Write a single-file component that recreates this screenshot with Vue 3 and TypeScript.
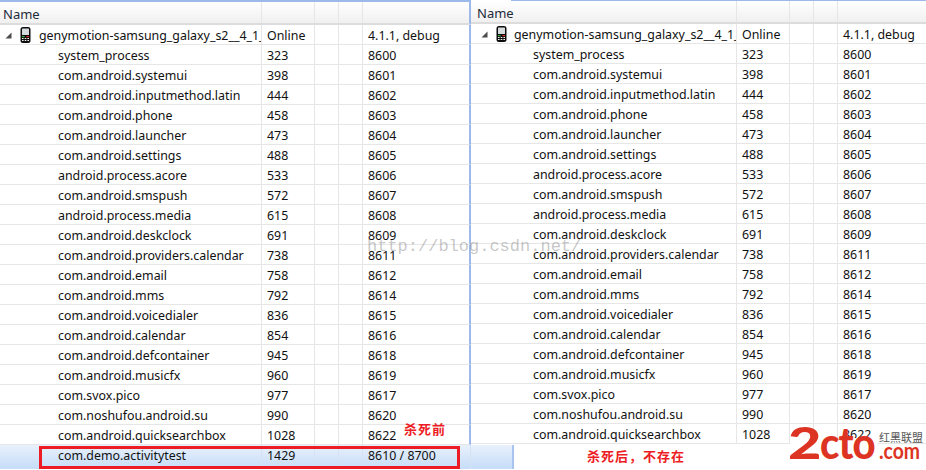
<script setup lang="ts">
interface Proc { name: string; pid: string; port: string }
const procs: Proc[] = [
  { name: 'system_process', pid: '323', port: '8600' },
  { name: 'com.android.systemui', pid: '398', port: '8601' },
  { name: 'com.android.inputmethod.latin', pid: '444', port: '8602' },
  { name: 'com.android.phone', pid: '458', port: '8603' },
  { name: 'com.android.launcher', pid: '473', port: '8604' },
  { name: 'com.android.settings', pid: '488', port: '8605' },
  { name: 'android.process.acore', pid: '533', port: '8606' },
  { name: 'com.android.smspush', pid: '572', port: '8607' },
  { name: 'android.process.media', pid: '615', port: '8608' },
  { name: 'com.android.deskclock', pid: '691', port: '8609' },
  { name: 'com.android.providers.calendar', pid: '738', port: '8611' },
  { name: 'com.android.email', pid: '758', port: '8612' },
  { name: 'com.android.mms', pid: '792', port: '8614' },
  { name: 'com.android.voicedialer', pid: '836', port: '8615' },
  { name: 'com.android.calendar', pid: '854', port: '8616' },
  { name: 'com.android.defcontainer', pid: '945', port: '8618' },
  { name: 'com.android.musicfx', pid: '960', port: '8619' },
  { name: 'com.svox.pico', pid: '977', port: '8617' },
  { name: 'com.noshufou.android.su', pid: '990', port: '8620' },
  { name: 'com.android.quicksearchbox', pid: '1028', port: '8622' },
]
const panels = ['before', 'after'] as const
</script>

<template>
  <div class="page">
    <section v-for="p in panels" :key="p" class="panel" :class="p">
      <div class="row head">
        <div class="c name">Name</div><div class="c"></div><div class="c"></div><div class="c"></div><div class="c"></div>
      </div>
      <div class="row">
        <div class="c name device">
          <svg class="twist" width="7" height="7" viewBox="0 0 7 7"><polygon points="6.5,0.5 6.5,6.5 0.5,6.5" fill="#4d4d4d" /></svg>
          <svg class="phone" width="11" height="16" viewBox="0 0 11 16">
            <rect x="0.5" y="0" width="10" height="16" rx="2.5" fill="#0c0c0c" />
            <rect x="2" y="1.5" width="7" height="6.5" rx="0.5" fill="#d5dadd" />
            <rect x="2" y="9" width="2.6" height="1.2" fill="#35b043" />
            <rect x="6.4" y="9" width="2.6" height="1.2" fill="#e02828" />
            <path d="M2 11.5h1.6M4.7 11.5h1.6M7.4 11.5h1.6M2 13.5h1.6M4.7 13.5h1.6M7.4 13.5h1.6" stroke="#f2f2f2" stroke-width="1" />
          </svg>
          <span class="clip">genymotion-samsung_galaxy_s2__4_1_</span>
        </div>
        <div class="c">Online</div><div class="c"></div><div class="c"></div><div class="c">4.1.1, debug</div>
      </div>
      <div v-for="r in procs" :key="r.name" class="row">
        <div class="c name proc">{{ r.name }}</div>
        <div class="c">{{ r.pid }}</div><div class="c"></div><div class="c"></div>
        <div class="c">{{ r.port }}</div>
      </div>
      <div v-if="p === 'before'" class="row selected">
        <div class="c name proc">com.demo.activitytest</div>
        <div class="c">1429</div><div class="c"></div><div class="c"></div>
        <div class="c">8610 / 8700</div><div class="c"></div>
      </div>
    </section>

    <div class="redbox"></div>
    <div class="note note-before">杀死前</div>
    <div class="note note-after">杀死后，不存在</div>
    <div class="watermark">http://blog.csdn.net/</div>
    <div class="logo">
      <span class="logo-main"><span class="two">2</span><span class="cto">cto</span></span>
      <span class="logo-side"><span class="logo-cn">红黑联盟</span><span class="logo-com">.com</span></span>
    </div>
  </div>
</template>

<style>
html, body { margin: 0; background: #fff; overflow: hidden; }
</style>

<style scoped>
.page {
  position: relative;
  display: flex;
  width: 926px;
  height: 470px;
  overflow: hidden;
  background: #fff;
  font-family: "Noto Sans", "Open Sans", sans-serif;
  font-size: 12.4px;
  color: #111;
}
.panel { flex: none; box-sizing: border-box; }
.before {
  width: 471px;
  height: 470px;
  border-top: 2px solid #9db9ea;
  --cols: 262px 53px 24px 24px 106px;
  position: relative;
  z-index: 1;
}
.after {
  width: 455px;
  border-top: 1px solid;
  border-image: linear-gradient(to right, #fff 41px, #9db9ea 41px) 1;
  --cols: 266px 53px 24px 24px 88px;
}
.row {
  display: grid;
  grid-template-columns: var(--cols);
  height: 20px;
  box-sizing: border-box;
  border-bottom: 1px solid #e6e6e6;
}
.before .row:not(.selected) { border-right: 2px solid #9db9ea; width: 471px; box-sizing: border-box; }
.after .row { width: 455px; }
.c {
  box-sizing: border-box;
  padding-left: 5px;
  padding-top: 1px;
  border-right: 1px solid #e6e6e6;
  line-height: 19px;
  white-space: nowrap;
  overflow: hidden;
}
.c:last-child { border-right: 0; }
.head {
  height: 23px;
  background: linear-gradient(#fff, #f0f0f0);
  border-bottom: 2px solid #dcdcdc;
  color: #1d2b3a;
  font-size: 13px;
}
.head .c { line-height: 22px; padding-left: 3px; }
.after .head .c:first-child { padding-left: 6px; }
.after .c:first-child { padding-left: 62px; }
.device { display: flex; align-items: center; padding-left: 0 !important; }
.after .device { padding-left: 5px !important; }
.twist { margin-left: 5px; flex: none; }
.phone { margin-left: 8px; flex: none; }
.clip { margin-left: 8px; }
.after .clip { margin-left: 7px; }
.proc { padding-left: 58px; }
.selected {
  width: 514px;
  height: 24px;
  grid-template-columns: 262px 53px 24px 24px 108px 43px;
  background: linear-gradient(#e8f1fc, #c6dcf8);
  border-bottom: 0;
  border-right: 2px solid #a9c4ee;
}
.selected .c { border-right-color: #d4e2f3; }
.redbox {
  position: absolute;
  left: 39px;
  top: 446px;
  width: 421px;
  height: 23px;
  box-sizing: border-box;
  border: 3px solid #ed1c24;
  z-index: 3;
}
.note {
  position: absolute;
  z-index: 4;
  color: #ed1c24;
  font-family: "Noto Sans CJK SC", sans-serif;
  font-weight: 700;
  font-size: 13px;
  letter-spacing: 1px;
  line-height: 16px;
}
.note-before { left: 404px; top: 421px; }
.note-after { left: 587px; top: 448px; }
.watermark {
  position: absolute;
  z-index: 4;
  left: 367px;
  top: 237px;
  font-family: "Liberation Mono", monospace;
  font-size: 17px;
  line-height: 20px;
  color: rgba(130, 130, 130, 0.45);
}
.logo {
  position: absolute;
  z-index: 5;
  left: 788px;
  top: 423px;
  display: flex;
  align-items: flex-end;
  color: #dd3322;
  height: 40px;
}
.logo::before {
  content: "";
  position: absolute;
  left: 2px;
  top: 15px;
  width: 88px;
  height: 8px;
  background: #fff;
}
.logo-main {
  position: relative;
  display: flex;
  width: 91px;
  font-family: "Lato", sans-serif;
  font-weight: 900;
  font-size: 43px;
  line-height: 40px;
}
.two {
  display: block;
  width: 37px;
  transform: scaleX(1.34);
  transform-origin: left center;
}
.cto {
  display: block;
  transform: scaleX(0.93);
  transform-origin: left center;
  letter-spacing: -1px;
}
.logo-side { display: flex; flex-direction: column; width: 46px; }
.logo-cn {
  font-family: "Noto Sans CJK SC", sans-serif;
  font-size: 11px;
  line-height: 12px;
  color: #555;
  position: relative;
  top: 1px;
}
.logo-com {
  font-family: "Lato", sans-serif;
  font-weight: 700;
  font-size: 23px;
  line-height: 17px;
  margin-bottom: 4px;
  transform: scaleX(0.84);
  transform-origin: left center;
  white-space: nowrap;
}
</style>
